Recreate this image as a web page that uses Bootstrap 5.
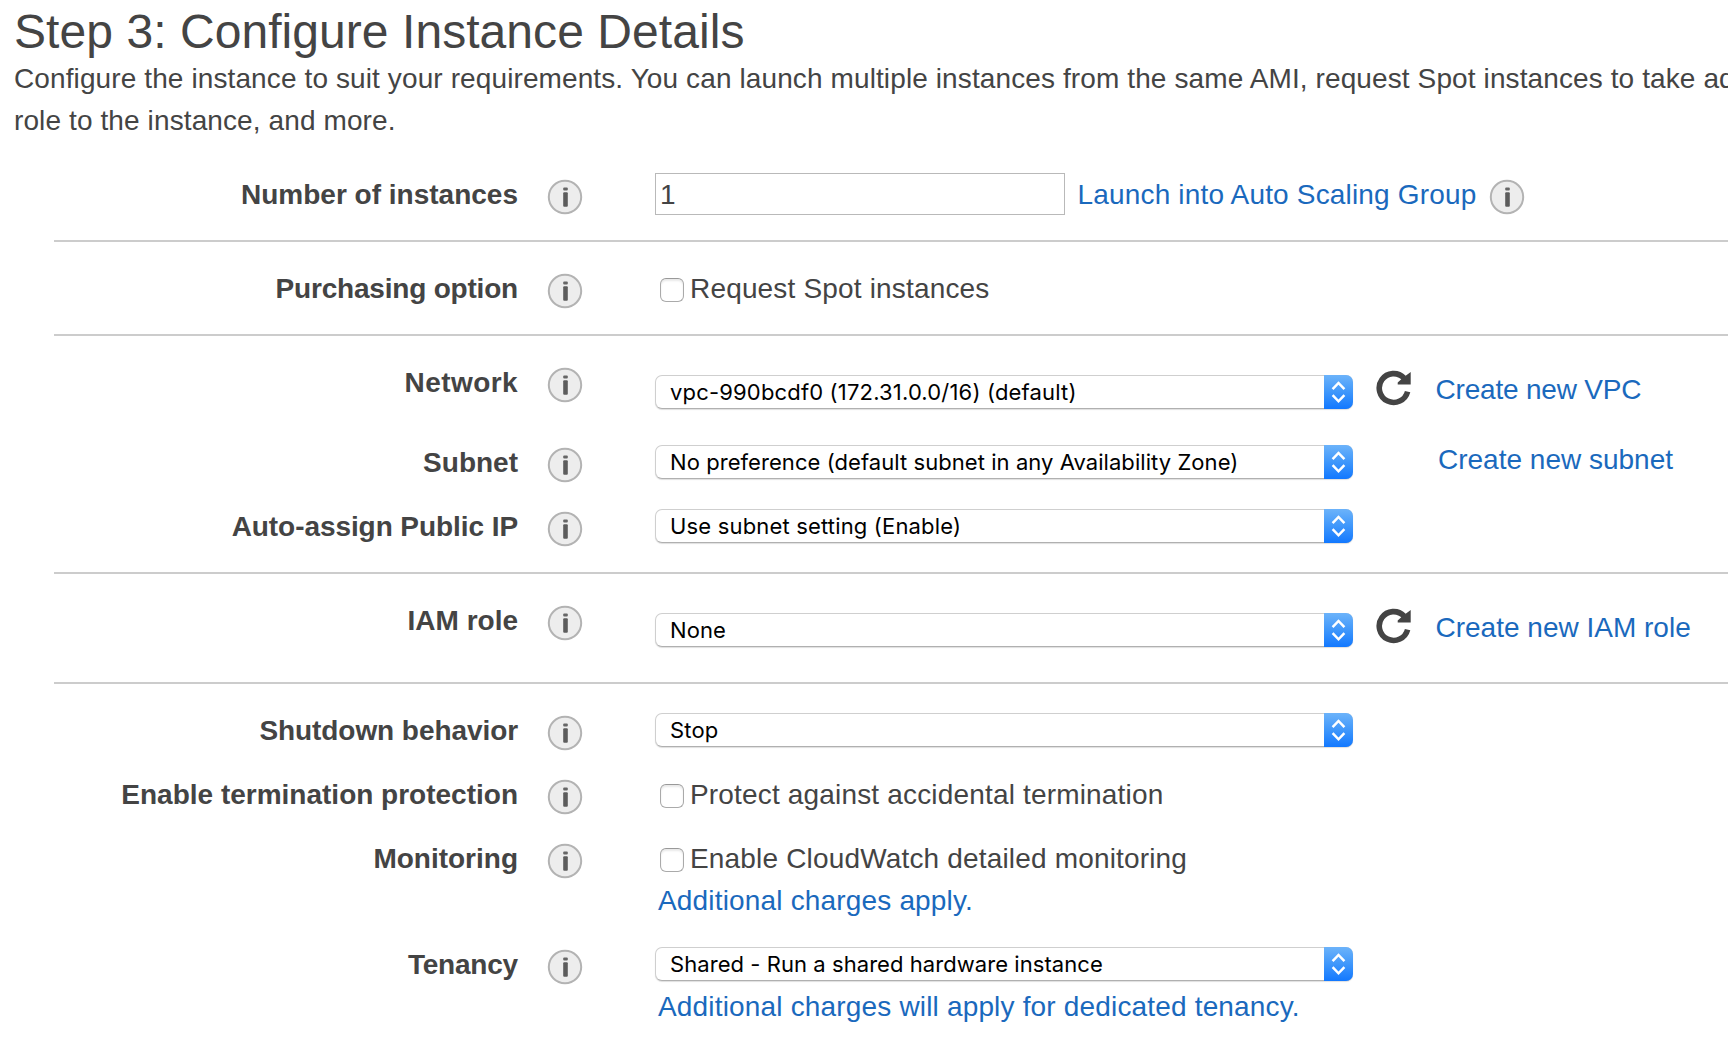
<!DOCTYPE html>
<html lang="en">
<head>
<meta charset="utf-8">
<meta name="viewport" content="width=device-width, initial-scale=1">
<title>Step 3: Configure Instance Details</title>
<link href="https://cdn.jsdelivr.net/npm/bootstrap@5.3.0/dist/css/bootstrap.min.css" rel="stylesheet">
<style>
  body { font: 28px/42px "Liberation Sans", Arial, sans-serif; color: #444; background: #fff; }
  .wizard { padding-left: 14px; height: 1044px; }
  .wizard-title { font-size: 48px; line-height: 51px; letter-spacing: .06px; padding-top: 6px; color: #444; font-weight: 400; }
  .wizard-intro { letter-spacing: .11px; padding-top: 1px; margin-bottom: 6px; }
  .wizard-form { margin-left: 40px; }
  .form-section { padding: 25px 0; gap: 22px; border-bottom: 2px solid #ccc; }
  .form-section:last-child { border-bottom: 0; }
  .field-label { width: 464px; height: 42px; padding-top: 1px; margin-right: 29px; font-weight: 700; text-align: right; white-space: nowrap; }
  .field-info { margin-top: 6px; width: 36px; height: 36px; flex: none; }
  .field-body { margin-left: 72px; }
  .field-body.lowered { padding-top: 14px; padding-bottom: 2px; height: 58px; }
  .field-body.nudged { padding-top: 4px; }
  .tight { letter-spacing: -.2px; }
  .snug { letter-spacing: -.07px; }
  .loose { letter-spacing: .17px; }
  .wide { letter-spacing: .42px; }
  a.console-link { color: #1a69bd; text-decoration: none; white-space: nowrap; }
  .count-input.form-control { width: 410px; height: 42px; font: inherit; color: #444; border: 1px solid #b9b9b9; border-radius: 0; padding: 1px 4px 0; }
  .picker { width: 698px; height: 34px; border: 1px solid #cfcfcf; border-bottom-color: #b0b0b0; border-radius: 7px; background: #fff; box-shadow: 0 1px 1px rgba(0,0,0,.13); }
  .picker select { appearance: none; border: 0; background: none; color: #000; font: 22px/31px Inter, sans-serif; letter-spacing: .06px; padding: 1px 0 0 14px; height: 32px; min-width: 0; }
  .picker select.loose { letter-spacing: .17px; }
  .picker svg { width: 29px; height: 34px; margin: -1px -1px 0 0; flex: none; }
  .side-link { line-height: 30px; height: 34px; }
  .reload { width: 36px; height: 36px; margin: -5px 0 0 22px; flex: none; }
  .check-line { height: 42px; padding-top: 1px; }
  .tick.form-check-input { width: 24px; height: 24px; margin: 10px 6px 0 5px; border: 1px solid #aaa; border-top-color: #999; border-radius: 6px; box-shadow: inset 0 2px 2px rgba(0,0,0,.09); float: none; flex: none; }
  .note { padding: 1px 0 0 3px; height: 42px; }
</style>
<script src="https://cdn.jsdelivr.net/npm/bootstrap@5.3.0/dist/js/bootstrap.bundle.min.js"></script>
</head>
<body>
<svg class="position-absolute" width="0" height="0" aria-hidden="true">
  <defs>
    <linearGradient id="cap-fill" x1="0" y1="0" x2="0" y2="1">
      <stop offset="0" stop-color="#6cb3fa"/><stop offset=".5" stop-color="#3f97fb"/><stop offset="1" stop-color="#1278ff"/>
    </linearGradient>
  </defs>
  <symbol id="info" viewBox="0 0 36 36">
    <circle cx="18" cy="18" r="16.2" fill="#ededed" stroke="#b3b3b3" stroke-width="2"/>
    <rect x="16.2" y="8.4" width="4.6" height="3.2" rx="1" fill="#666"/>
    <rect x="16.2" y="13.2" width="4.6" height="14.6" rx="1" fill="#5c5c5c"/>
  </symbol>
  <symbol id="reload" viewBox="0 0 36 36">
    <path d="M32.6 21.6A14.4 14.4 0 1 1 29 8" fill="none" stroke="#444" stroke-width="5.6"/>
    <path d="M35.7 2V14.6H22.7V12.4L26.5 9L31 5.6Z" fill="#444"/>
  </symbol>
  <symbol id="stepper" viewBox="0 0 29 34">
    <path d="M0 0H22A7 7 0 0 1 29 7V27A7 7 0 0 1 22 34H0Z" fill="url(#cap-fill)"/>
    <path d="M8.6 14.1L14.5 8L20.4 14.1M8.6 20.2L14.5 26.3L20.4 20.2" fill="none" stroke="#fff" stroke-width="2.5"/>
  </symbol>
</svg>

<main class="wizard overflow-hidden">
  <h1 class="wizard-title text-nowrap mb-0">Step 3: Configure Instance Details</h1>
  <p class="wizard-intro text-nowrap">Configure the instance to suit your requirements. You can launch multiple instances from the same AMI, request Spot instances to take advantage<br>role to the instance, and more.</p>

  <form class="wizard-form">
    <section class="form-section d-flex flex-column">
      <div class="d-flex align-items-start">
        <label class="field-label" for="count">Number of instances</label>
        <svg class="field-info"><use href="#info"/></svg>
        <div class="field-body d-flex">
          <input class="form-control count-input" id="count" type="text" value="1">
          <a class="console-link check-line loose" style="margin-left:12.5px" href="#">Launch into Auto Scaling Group</a>
          <svg class="field-info" style="margin-left:13px"><use href="#info"/></svg>
        </div>
      </div>
    </section>

    <section class="form-section d-flex flex-column">
      <div class="d-flex align-items-start">
        <span class="field-label tight">Purchasing option</span>
        <svg class="field-info"><use href="#info"/></svg>
        <label class="field-body check-line d-flex loose"><input class="form-check-input tick" type="checkbox">Request Spot instances</label>
      </div>
    </section>

    <section class="form-section d-flex flex-column">
      <div class="d-flex align-items-start">
        <label class="field-label wide" for="network">Network</label>
        <svg class="field-info"><use href="#info"/></svg>
        <div class="field-body lowered d-flex">
          <div class="picker d-flex"><select class="flex-grow-1 loose" id="network"><option>vpc-990bcdf0 (172.31.0.0/16) (default)</option></select><svg><use href="#stepper"/></svg></div>
          <svg class="reload"><use href="#reload"/></svg>
          <a class="console-link side-link tight" style="margin-left:24.5px" href="#">Create new VPC</a>
        </div>
      </div>
      <div class="d-flex align-items-start">
        <label class="field-label" for="subnet">Subnet</label>
        <svg class="field-info"><use href="#info"/></svg>
        <div class="field-body nudged d-flex">
          <div class="picker d-flex"><select class="flex-grow-1" id="subnet"><option>No preference (default subnet in any Availability Zone)</option></select><svg><use href="#stepper"/></svg></div>
          <a class="console-link side-link" style="margin-left:85px" href="#">Create new subnet</a>
        </div>
      </div>
      <div class="d-flex align-items-start">
        <label class="field-label snug" for="publicip">Auto-assign Public IP</label>
        <svg class="field-info"><use href="#info"/></svg>
        <div class="field-body nudged d-flex">
          <div class="picker d-flex"><select class="flex-grow-1 loose" id="publicip"><option>Use subnet setting (Enable)</option></select><svg><use href="#stepper"/></svg></div>
        </div>
      </div>
    </section>

    <section class="form-section d-flex flex-column">
      <div class="d-flex align-items-start">
        <label class="field-label" for="iam">IAM role</label>
        <svg class="field-info"><use href="#info"/></svg>
        <div class="field-body lowered d-flex">
          <div class="picker d-flex"><select class="flex-grow-1" id="iam"><option>None</option></select><svg><use href="#stepper"/></svg></div>
          <svg class="reload"><use href="#reload"/></svg>
          <a class="console-link side-link" style="margin-left:24.5px" href="#">Create new IAM role</a>
        </div>
      </div>
    </section>

    <section class="form-section d-flex flex-column">
      <div class="d-flex align-items-start">
        <label class="field-label snug" for="shutdown">Shutdown behavior</label>
        <svg class="field-info"><use href="#info"/></svg>
        <div class="field-body nudged d-flex">
          <div class="picker d-flex"><select class="flex-grow-1 loose" id="shutdown"><option>Stop</option></select><svg><use href="#stepper"/></svg></div>
        </div>
      </div>
      <div class="d-flex align-items-start">
        <span class="field-label">Enable termination protection</span>
        <svg class="field-info"><use href="#info"/></svg>
        <label class="field-body check-line d-flex loose"><input class="form-check-input tick" type="checkbox">Protect against accidental termination</label>
      </div>
      <div class="d-flex align-items-start">
        <span class="field-label">Monitoring</span>
        <svg class="field-info"><use href="#info"/></svg>
        <div class="field-body loose">
          <label class="check-line d-flex"><input class="form-check-input tick" type="checkbox">Enable CloudWatch detailed monitoring</label>
          <a class="console-link note d-block" href="#">Additional charges apply.</a>
        </div>
      </div>
      <div class="d-flex align-items-start">
        <label class="field-label tight" for="tenancy">Tenancy</label>
        <svg class="field-info"><use href="#info"/></svg>
        <div class="field-body nudged loose">
          <div class="picker d-flex"><select class="flex-grow-1" id="tenancy"><option>Shared - Run a shared hardware instance</option></select><svg><use href="#stepper"/></svg></div>
          <a class="console-link note d-block" style="margin-top:4px" href="#">Additional charges will apply for dedicated tenancy.</a>
        </div>
      </div>
    </section>
  </form>
</main>
</body>
</html>
